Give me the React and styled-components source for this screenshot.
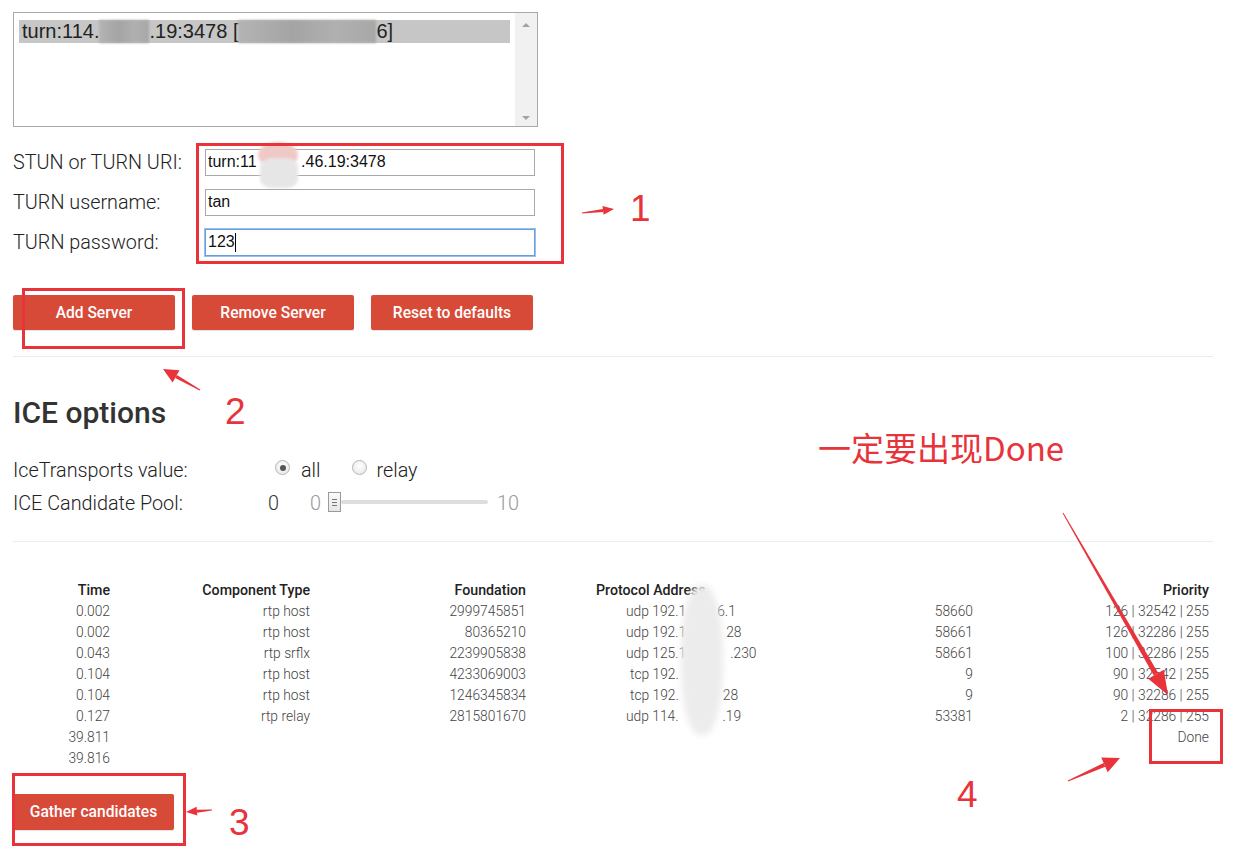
import React from "react";
import styled, { createGlobalStyle } from "styled-components";

const Global = createGlobalStyle`
  html, body { margin: 0; padding: 0; background: #fff; }
  body { font-family: Roboto, "Noto Sans", sans-serif; color: #333; }
`;

const Page = styled.div`
  position: relative;
  width: 1248px;
  height: 852px;
  overflow: hidden;
  box-sizing: border-box;
  padding: 12px 0 0 13px;
`;

const Main = styled.div`
  width: 1200px;
`;

const ServerList = styled.div`
  width: 525px;
  height: 115px;
  box-sizing: border-box;
  border: 1px solid #a9a9a9;
  display: flex;
  background: #fff;
`;

const ListBody = styled.div`
  flex: 1;
  padding: 7px 5px 0 5px;
`;

const Option = styled.div`
  background: #c6c6c6;
  height: 23px;
  line-height: 23px;
  padding-left: 3px;
  font-family: "Liberation Sans", Arial, sans-serif;
  font-size: 20px;
  color: #222;
  white-space: nowrap;
  display: flex;
  align-items: center;
`;

const Smudge = styled.span`
  display: inline-block;
  width: ${(p) => p.$w}px;
  height: 23px;
  background: linear-gradient(90deg, #b4b4b4, #a4a4a4 40%, #b0b0b0 70%, #a8a8a8);
  filter: blur(1px);
`;

const ScrollBar = styled.div`
  width: 22px;
  background: #f1f1f1;
  display: flex;
  flex-direction: column;
  justify-content: space-between;
  align-items: center;
  padding: 10px 0 6px;
`;

const Tri = styled.span`
  width: 0;
  height: 0;
  border-left: 4px solid transparent;
  border-right: 4px solid transparent;
  ${(p) => (p.$down ? "border-top: 4px solid #a3a3a3;" : "border-bottom: 4px solid #a3a3a3;")}
`;

const Form = styled.div`
  margin-top: 15px;
  display: grid;
  grid-template-columns: 192px 330px;
  grid-auto-rows: 40px;
  align-items: center;
`;

const Label = styled.label`
  font-size: 19.8px;
  font-weight: 300;
  color: #222;
  white-space: nowrap;
`;

const TextInput = styled.div`
  height: 27px;
  box-sizing: border-box;
  border: 1px solid ${(p) => (p.$focus ? "#6a9be0" : "#a9a9a9")};
  box-shadow: ${(p) => (p.$focus ? "0 0 0 1px #9cc0ee" : "none")};
  font-family: "Liberation Sans", Arial, sans-serif;
  font-size: 16px;
  color: #111;
  padding: 0 2px;
  display: flex;
  align-items: center;
  position: relative;
  white-space: pre;
`;

const Caret = styled.span`
  display: inline-block;
  width: 1px;
  height: 19px;
  background: #000;
`;

const Blob = styled.span`
  position: absolute;
  left: ${(p) => p.$x}px;
  top: ${(p) => p.$y}px;
  width: ${(p) => p.$w}px;
  height: ${(p) => p.$h}px;
  border-radius: ${(p) => p.$r || "40%"};
  background: ${(p) => p.$bg || "#e6e6e6"};
  filter: blur(${(p) => p.$b || 2}px);
  pointer-events: none;
`;

const ButtonRow = styled.div`
  margin-top: 33px;
  display: flex;
  gap: 17px;
`;

const Button = styled.button`
  width: ${(p) => p.$w || 162}px;
  height: ${(p) => p.$h || 35}px;
  border: none;
  border-radius: 2px;
  background: #d84a38;
  color: #fff;
  font-family: Roboto, sans-serif;
  font-weight: 500;
  font-size: 15.6px;
  padding: 0;
  box-shadow: 0 1px 1px rgba(0, 0, 0, 0.12);
`;

const Rule = styled.hr`
  border: none;
  border-top: 1px solid #ececec;
  margin: ${(p) => p.$m || "26px 0 0"};
  width: 1200px;
`;

const Heading = styled.h2`
  margin: 39px 0 0;
  font-size: 30px;
  font-weight: 500;
  color: #333;
  line-height: 34px;
`;

const OptionRow = styled.div`
  display: flex;
  align-items: center;
  height: 33px;
  margin-top: ${(p) => p.$mt || 0}px;
  font-size: 19.8px;
  font-weight: 300;
  color: #222;
`;

const OptLabel = styled.span`
  width: ${(p) => p.$w}px;
  flex: none;
`;

const Radio = styled.span`
  width: 13px;
  height: 13px;
  border-radius: 50%;
  border: 1px solid #b5b5b5;
  background: radial-gradient(circle at 50% 40%, #fff, #e4e4e4);
  display: inline-flex;
  align-items: center;
  justify-content: center;
  margin: -6px ${(p) => p.$mr}px 0 0;
  &::after {
    content: "";
    width: 6px;
    height: 6px;
    border-radius: 50%;
    background: ${(p) => (p.$on ? "#555" : "transparent")};
  }
`;

const RadioText = styled.span`
  margin-right: ${(p) => p.$mr || 0}px;
`;

const PoolValue = styled.span`
  width: 42px;
  color: #333;
`;

const Muted = styled.span`
  color: #999;
`;

const Slider = styled.span`
  position: relative;
  width: 160px;
  height: 20px;
  margin: -3px 9px 0 7px;
  display: flex;
  align-items: center;
`;

const Track = styled.span`
  flex: 1;
  height: 4px;
  margin-left: 13px;
  background: #dedede;
  border-radius: 2px;
`;

const Thumb = styled.span`
  position: absolute;
  left: 0;
  top: 0;
  width: 11px;
  height: 18px;
  border: 1px solid #9a9a9a;
  background: linear-gradient(#fafafa, #e6e6e6);
  display: flex;
  flex-direction: column;
  justify-content: center;
  align-items: center;
  gap: 2px;
  & > i {
    display: block;
    width: 5px;
    height: 1px;
    background: #777;
  }
`;

const Table = styled.div`
  margin-top: 37px;
  display: grid;
  grid-template-columns: 97px 200px 216px 70px 377px 236px;
  grid-auto-rows: 21px;
  align-items: center;
  font-size: 13.8px;
  position: relative;
`;

const Th = styled.div`
  font-weight: 500;
  font-size: 14.2px;
  color: #222;
  text-align: ${(p) => p.$align || "right"};
  white-space: nowrap;
  padding-left: ${(p) => p.$pl || 0}px;
  ${(p) => p.$span && `grid-column: span ${p.$span};`}
`;

const Td = styled.div`
  font-weight: 300;
  color: #444;
  text-align: ${(p) => p.$align || "right"};
  white-space: nowrap;
  padding-left: ${(p) => p.$pl || 0}px;
  ${(p) => p.$span && `grid-column: span ${p.$span};`}
`;

const Hidden = styled.span`
  display: inline-block;
  width: ${(p) => p.$w}px;
`;

const GatherWrap = styled.div`
  margin-top: 26px;
`;

/* annotations */
const Box = styled.div`
  position: absolute;
  left: ${(p) => p.$x}px;
  top: ${(p) => p.$y}px;
  width: ${(p) => p.$w}px;
  height: ${(p) => p.$h}px;
  box-sizing: border-box;
  border: 3px solid #e8333b;
  pointer-events: none;
`;

const Num = styled.span`
  position: absolute;
  left: ${(p) => p.$x}px;
  top: ${(p) => p.$y}px;
  font-family: "Liberation Sans", Arial, sans-serif;
  font-size: 37px;
  line-height: 1;
  color: #e8333b;
`;

const Note = styled.span`
  position: absolute;
  left: 818px;
  top: 427px;
  font-family: "Noto Sans CJK SC", "Noto Sans", sans-serif;
  font-size: 33px;
  line-height: 40px;
  color: #e8333b;
  white-space: nowrap;
`;

const Overlay = styled.svg`
  position: absolute;
  left: 0;
  top: 0;
  pointer-events: none;
`;

function arrow(x1, y1, x2, y2, head = 14, hw = 6, sw = 1.2, ew = 3) {
  const dx = x2 - x1;
  const dy = y2 - y1;
  const len = Math.hypot(dx, dy);
  const ux = dx / len;
  const uy = dy / len;
  const nx = -uy;
  const ny = ux;
  const bx = x2 - ux * head;
  const by = y2 - uy * head;
  const shaft = [
    [x1 + nx * sw * 0.5, y1 + ny * sw * 0.5],
    [bx + nx * ew * 0.5, by + ny * ew * 0.5],
    [bx - nx * ew * 0.5, by - ny * ew * 0.5],
    [x1 - nx * sw * 0.5, y1 - ny * sw * 0.5],
  ];
  const tip = [
    [x2, y2],
    [bx + nx * hw, by + ny * hw],
    [bx - nx * hw, by - ny * hw],
  ];
  const f = (pts) => pts.map((p) => p.map((v) => v.toFixed(1)).join(",")).join(" ");
  return (
    <g key={`${x1}-${y1}`} fill="#e8333b">
      <polygon points={f(shaft)} />
      <polygon points={f(tip)} />
    </g>
  );
}

const rows = [
  ["0.002", "rtp host", "2999745851", "udp 192.1", 31, "6.1", "58660", "126 | 32542 | 255"],
  ["0.002", "rtp host", "80365210", "udp 192.1", 40, "28", "58661", "126 | 32286 | 255"],
  ["0.043", "rtp srflx", "2239905838", "udp 125.1", 44, ".230", "58661", "100 | 32286 | 255"],
  ["0.104", "rtp host", "4233069003", "tcp 192.", 0, "", "9", "90 | 32542 | 255"],
  ["0.104", "rtp host", "1246345834", "tcp 192.", 44, "28", "9", "90 | 32286 | 255"],
  ["0.127", "rtp relay", "2815801670", "udp 114.", 44, ".19", "53381", "2 | 32286 | 255"],
];

export default function App() {
  return (
    <>
      <Global />
      <Page>
        <Main>
          <ServerList>
            <ListBody>
              <Option>
                turn:114.<Smudge $w={50} />.19:3478 [<Smudge $w={138} />6]
              </Option>
            </ListBody>
            <ScrollBar>
              <Tri />
              <Tri $down />
            </ScrollBar>
          </ServerList>

          <Form>
            <Label>STUN or TURN URI:</Label>
            <TextInput>
              {"turn:11          .46.19:3478"}
              <Blob $x={52} $y={-8} $w={40} $h={26} $bg="#efc9c6" $r="50%" $b={1.5} />
              <Blob $x={54} $y={8} $w={38} $h={30} $bg="#e6e6e6" $r="30%" $b={1.5} />
            </TextInput>
            <Label>TURN username:</Label>
            <TextInput>tan</TextInput>
            <Label>TURN password:</Label>
            <TextInput $focus>
              123
              <Caret />
            </TextInput>
          </Form>

          <ButtonRow>
            <Button>Add Server</Button>
            <Button>Remove Server</Button>
            <Button>Reset to defaults</Button>
          </ButtonRow>

          <Rule />

          <Heading>ICE options</Heading>
          <OptionRow $mt={24}>
            <OptLabel $w={262}>IceTransports value:</OptLabel>
            <Radio $on $mr={11} />
            <RadioText $mr={31}>all</RadioText>
            <Radio $mr={10} />
            <RadioText>relay</RadioText>
          </OptionRow>
          <OptionRow>
            <OptLabel $w={255}>ICE Candidate Pool:</OptLabel>
            <PoolValue>0</PoolValue>
            <Muted>0</Muted>
            <Slider>
              <Thumb>
                <i />
                <i />
                <i />
              </Thumb>
              <Track />
            </Slider>
            <Muted>10</Muted>
          </OptionRow>

          <Rule $m="21px 0 0" />

          <Table>
            <Th>Time</Th>
            <Th>Component Type</Th>
            <Th>Foundation</Th>
            <Th $align="left" $span={2} $pl={70}>
              Protocol Address
            </Th>
            <Th>Priority</Th>
            {rows.map((r, i) => (
              <React.Fragment key={i}>
                <Td>{r[0]}</Td>
                <Td>{r[1]}</Td>
                <Td>{r[2]}</Td>
                <Td $align="left" $pl={r[3].startsWith("tcp") ? 104 : 100}>
                  {r[3]}
                  <Hidden $w={r[4]} />
                  {r[5]}
                </Td>
                <Td>{r[6]}</Td>
                <Td>{r[7]}</Td>
              </React.Fragment>
            ))}
            <Td>39.811</Td>
            <Td $span={4} />
            <Td>Done</Td>
            <Td>39.816</Td>
            <Td $span={5} />
            <Blob $x={668} $y={6} $w={42} $h={150} $bg="#ececec" $r="45%" $b={3} />
          </Table>

          <GatherWrap>
            <Button $w={161} $h={36}>Gather candidates</Button>
          </GatherWrap>
        </Main>

        <Box $x={196} $y={143} $w={368} $h={121} />
        <Box $x={22} $y={288} $w={163} $h={61} />
        <Box $x={12} $y={773} $w={174} $h={73} />
        <Box $x={1149} $y={709} $w={74} $h={55} />

        <Num $x={630} $y={190}>1</Num>
        <Num $x={225} $y={393}>2</Num>
        <Num $x={229} $y={804}>3</Num>
        <Num $x={957} $y={776}>4</Num>
        <Note>一定要出现Done</Note>

        <Overlay width="1248" height="852" viewBox="0 0 1248 852">
          {arrow(582, 213, 614, 209, 11, 4.5, 1, 3)}
          {arrow(200, 390, 163, 369, 15, 7, 1.2, 3.5)}
          {arrow(212, 810, 186, 812, 11, 4.5, 1, 3)}
          {arrow(1068, 781, 1120, 758, 17, 8, 1.2, 4)}
          {arrow(1063, 513, 1168, 695, 24, 9, 1, 5)}
        </Overlay>
      </Page>
    </>
  );
}
